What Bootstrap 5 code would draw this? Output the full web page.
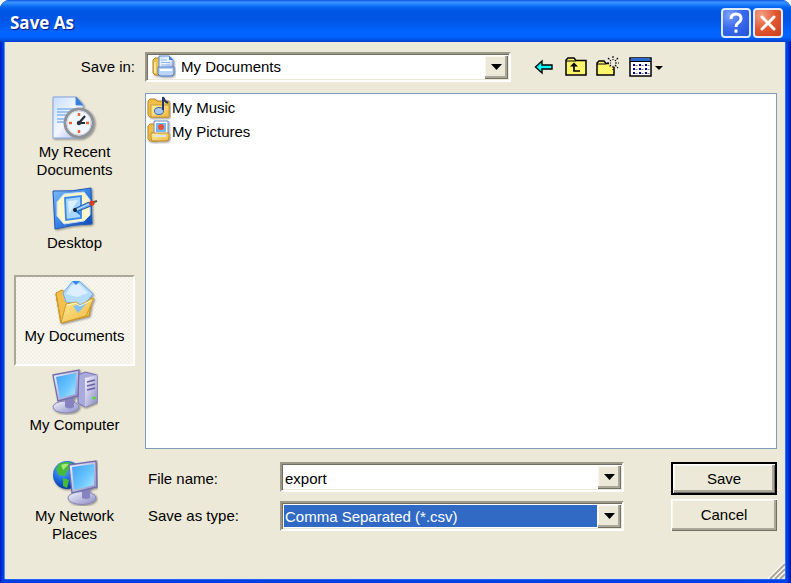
<!DOCTYPE html>
<html lang="en">
<head>
<meta charset="utf-8">
<meta name="viewport" content="width=device-width, initial-scale=1">
<title>Save As</title>
<link href="https://cdn.jsdelivr.net/npm/bootstrap@5.3.0/dist/css/bootstrap.min.css" rel="stylesheet">
<style>
  :root { --face: #ece9d8; --edge: #716f64; --shade: #aca899; --pick: #316ac5; }
  body { background: #fff; color: #000; font: 15px/18px "Liberation Sans", Arial, sans-serif; }
  .window { border-radius: 9px 9px 0 0; overflow: hidden; background: linear-gradient(90deg, #0019c8 0, #0040e0 3px, #0042e6 calc(100% - 4px), #0014a8 100%); }
  .titlebar {
    height: 42px; padding: 4px 8px 0 10px;
    background: linear-gradient(#0a50d8 0, #3c93ff 2px, #2a86ff 4px, #0566f2 7px, #0055e3 11px, #0055e5 20px, #0262fc 30px, #0264ff 37px, #0050e0 40px, #003cc8 42px);
  }
  .titlebar h1 { font: bold 17px/24px "Open Sans", "Noto Sans", sans-serif; color: #fff; text-shadow: 1px 1px 1px #0a1883; }
  .caption-btn { width: 30px; height: 30px; border: 2px solid #dfe9ff; border-radius: 4px; }
  .help-btn { margin-right: 2px; background: radial-gradient(circle at 25% 20%, #7ea2f6, #3a6bee 45%, #2350d8); }
  .close-btn { background: radial-gradient(circle at 25% 20%, #f2a084, #e2562f 50%, #c8401c); }
  .client {
    background: var(--face); margin: 0 6px 4px 5px; padding: 10px 8px 0 9px;
    box-shadow: -1px 0 #4d8cff, 0 1px #1d5eff, 1px 0 #2c6cff;
  }
  .side-width { width: 121px; }
  .gap-main { gap: 10px; }
  .tool-row { margin-bottom: 11px; }
  .combo {
    height: 30px; background: #fff; border: 2px solid; padding: 1px;
    border-color: #9c9989 #fff #fff #9c9989; box-shadow: inset 1px 1px var(--edge), inset -1px -1px var(--face);
  }
  .lookin { flex: 0 1 366px; }
  .combo select, .combo input {
    appearance: none; border: 0; outline: 0; background: transparent; padding: 0 1px; font: inherit; color: #000; border-radius: 0; margin: 1px 0 1px 1px;
  }
  .combo input { padding-top: 3px; }
  .combo .with-icon { padding-left: 32px; }
  .combo .picked { background: var(--pick); color: #fff; padding-top: 2px; }
  .combo .picked option { background: #fff; color: #000; }
  .lookin-icon { left: 5px; top: 1px; pointer-events: none; }
  .drop, .push {
    background: var(--face); border: 0; padding: 0; color: #000;
    box-shadow: inset 1px 1px #fff, inset -1px -1px var(--edge), inset -3px -3px var(--shade), inset 2px 2px #f8f6ee;
  }
  .drop { width: 24px; flex: none; }
  .drop-cover { pointer-events: none; }
  .tools { margin-left: 13px; gap: 9px; }
  .tools button { border: 0; padding: 0; background: none; line-height: 0; }
  .place { height: 91px; padding: 3px 0 0; border: 0; background: none; color: #000; line-height: 18px; }
  .place svg { margin-bottom: 1px; flex: none; }
  .place.chosen {
    border: 2px solid; border-color: var(--shade) #fff #fff var(--shade);
    background: repeating-conic-gradient(#faf8f1 0 25%, #f2f0e5 0 50%) 0 0 / 4px 4px;
  }
  .files { background: #fff; border: 1px solid #7f9db9; padding: 2px 1px; }
  .files a { color: #000; height: 24px; gap: 1px; }
  .fields { padding: 13px 0 48px; }
  .field-row label { flex: 0 0 135px; padding: 8px 0 6px 3px; }
  .push { flex: 0 0 106px; margin-left: 47px; height: 32px; }
  .push.main-push { border: 2px solid #000; height: 33px; }
  .grip { right: 6px; bottom: 4px; }
</style>
</head>
<body>
<svg width="0" height="0" class="position-absolute" aria-hidden="true">
  <defs>
    <linearGradient id="paper" x1="0" y1="0" x2="1" y2="1"><stop offset="0" stop-color="#c4dcff"/><stop offset=".5" stop-color="#f2f7ff"/><stop offset="1" stop-color="#a8b4ee"/></linearGradient>
    <linearGradient id="screen" x1="0" y1="0" x2="1" y2="1"><stop offset="0" stop-color="#3fa0f4"/><stop offset=".6" stop-color="#6cc8ff"/><stop offset="1" stop-color="#b2eaff"/></linearGradient>
    <linearGradient id="gold" x1="0" y1="0" x2="1" y2="1"><stop offset="0" stop-color="#fff3a8"/><stop offset="1" stop-color="#efb73c"/></linearGradient>
    <linearGradient id="metal" x1="0" y1="0" x2="1" y2="1"><stop offset="0" stop-color="#f4f4ff"/><stop offset="1" stop-color="#8c8cc4"/></linearGradient>
    <linearGradient id="tile" x1="0" y1="0" x2="1" y2="1"><stop offset="0" stop-color="#7cbcf8"/><stop offset=".5" stop-color="#3b84e4"/><stop offset="1" stop-color="#0b43b0"/></linearGradient>
    <radialGradient id="globe" cx=".35" cy=".3" r=".8"><stop offset="0" stop-color="#5cb8ff"/><stop offset=".55" stop-color="#1663d8"/><stop offset="1" stop-color="#062e88"/></radialGradient>
    <pattern id="dither" width="2" height="2" patternUnits="userSpaceOnUse"><path fill="#fff54a" d="M0 0h2v2H0z"/><path fill="#fff68c" d="M0 0h1v1H0zM1 1h1v1H1z"/></pattern>
    <filter id="drop" x="-20%" y="-20%" width="150%" height="150%"><feDropShadow dx="1" dy="1" stdDeviation="1" flood-opacity=".45"/></filter>
  </defs>
</svg>

<main class="window d-flex flex-column min-vh-100 position-relative">
  <header class="titlebar d-flex align-items-center">
    <h1 class="m-0 me-auto">Save As</h1>
    <button class="caption-btn help-btn p-0 d-flex align-items-center justify-content-center" aria-label="Help">
      <svg width="20" height="22" viewBox="0 0 20 22" fill="none" stroke="#fff" stroke-width="3"><path d="M5 7q0-5 5-5t5 4.500q0 2.500-3 4.500-2 1.500-2 4"/><path d="M10 17.500v3.200"/></svg>
    </button>
    <button class="caption-btn close-btn p-0 d-flex align-items-center justify-content-center" aria-label="Close">
      <svg width="18" height="18" viewBox="0 0 18 18" stroke="#fff" stroke-width="3" stroke-linecap="round"><path d="M3 3l12 12M15 3L3 15"/></svg>
    </button>
  </header>

  <div class="client flex-grow-1 d-flex flex-column">
    <div class="tool-row d-flex align-items-center gap-main">
      <label class="side-width text-end flex-shrink-0" for="lookin">Save in:</label>
      <div class="combo lookin d-flex position-relative">
        <svg class="lookin-icon position-absolute" width="24" height="24" viewBox="0 0 24 24">
          <g filter="url(#drop)"><path d="M1 5l2-2h4l2 2v15H3l-2-2z" fill="#f1c04c" stroke="#b9862a"/>
          <path d="M7 1h10l4 4v8H7z" fill="url(#paper)" stroke="#5c8fd4"/><path d="M17 1v4h4z" fill="#3c82dc"/><path d="M9 5h6M9 7.500h9M9 10h9" stroke="#8db8ec"/>
          <path d="M6 12h16v6q0 3-3 3H9q-3 0-3-3z" fill="#b9d4f6" stroke="#4c7cc0"/><path d="M8 15h12" stroke="#fff" stroke-width="2"/><path d="M3 7v11" stroke="#ffe595" stroke-width="2"/></g>
        </svg>
        <select id="lookin" class="with-icon flex-grow-1"><option>My Documents</option></select>
        <span class="drop d-flex align-items-center justify-content-center drop-cover"><svg width="11" height="6"><path d="M0 0h11L5.500 6z"/></svg></span>
      </div>
      <div class="tools d-flex align-items-center">
        <button aria-label="Back"><svg width="22" height="24" viewBox="0 0 22 24"><path d="M1.500 12L8 6v4h10v4H8v4z" fill="#0ff" stroke="#000" stroke-width="1.400"/></svg></button>
        <button aria-label="Up one level"><svg width="22" height="24" viewBox="0 0 22 24"><path d="M1 20V5l2-2h6l2 2.500h10V20z" fill="url(#dither)" stroke="#000" stroke-width="1.500"/><path d="M1 6h10" stroke="#000"/><path d="M9 10v6h6" fill="none" stroke="#000" stroke-width="1.700"/><path d="M5 11.500L9 7.500l4 4z"/></svg></button>
        <button aria-label="New folder"><svg width="24" height="24" viewBox="0 0 24 24"><path d="M1 20V8l2-2h5l2 2.500h8V20z" fill="url(#dither)" stroke="#000" stroke-width="1.500"/><path d="M1 9h9" stroke="#000"/><circle cx="17" cy="8" r="4" fill="#ece9d8"/><path d="M17 1v4M17 11v4M11 8h4M19 8h4M12 3l3 3M22 3l-3 3M19 10l3 3M15 10l-2 2" stroke="#000" stroke-width="1.100" stroke-dasharray="2 1"/></svg></button>
        <button aria-label="View menu"><svg width="34" height="24" viewBox="0 0 34 24"><path d="M1 3h21v18H1z" fill="#fff" stroke="#000" stroke-width="1.500"/><path d="M2 3h19v3H2z" fill="#2a68cc"/><path d="M1 6.500h21" stroke="#000"/><path d="M4 10h2M10 10h2M16 10h2M4 14h2M10 14h2M16 14h2M4 18h2M10 18h2M16 18h2" stroke="#000098" stroke-width="2"/><path d="M6.500 10.500h2M12.500 10.500h2M18.500 10.500h2M6.500 14.500h2M12.500 14.500h2M18.500 14.500h2M6.500 18.500h2M12.500 18.500h2M18.500 18.500h2" stroke="#778"/><path d="M26 11h8l-4 4z"/></svg></button>
      </div>
    </div>

    <div class="d-flex flex-grow-1 gap-main">
      <nav class="side-width flex-shrink-0 d-flex flex-column" aria-label="Places">
        <button class="place d-flex flex-column align-items-center justify-content-start">
          <svg width="46" height="46" viewBox="0 0 46 46"><g filter="url(#drop)">
            <path d="M1 1h23l7 8v33H1z" fill="url(#paper)" stroke="#86a6de"/><path d="M24 1v8h7z" fill="#2f7fe0" stroke="#4a86d4"/>
            <path d="M5 13h18M5 16h14M5 19h10M5 23h8M5 26h7" stroke="#84b6f0" stroke-width="1.300"/>
            <circle cx="27" cy="27" r="14" fill="#fff" stroke="#8f9299" stroke-width="3"/><circle cx="27" cy="27" r="12" fill="#f0f8ff" stroke="#cfd4dc"/></g>
            <path d="M27 17v3M27 34v3M17 27h3M34 27h3" stroke="#f0642c" stroke-width="2.500"/><path d="M33 20l-6 7h6" fill="none" stroke="#26303c" stroke-width="2.200"/><circle cx="27" cy="27" r="2.200" fill="#334"/>
          </svg><span>My Recent<br>Documents</span>
        </button>
        <button class="place d-flex flex-column align-items-center justify-content-start">
          <svg width="46" height="46" viewBox="0 0 46 46"><g filter="url(#drop)">
            <path d="M1 4q20 1 38-3l1 36q-19 0-37 5z" fill="url(#tile)" stroke="#1c58b8"/>
            <path d="M12 7l20-2 6 8v15l-6 6-20 3-7-8V15z" fill="#fff6cc" stroke="#c9ddf4"/>
            <path d="M13 11l16-2v22l-15 2z" fill="#a7d6ff" stroke="#3a8bea" stroke-width="1.800"/><path d="M16 14l10-1-9 14z" fill="#dcefff"/></g>
            <path d="M22 22l15-7 2 4-15 6z" fill="#5ea8f6" stroke="#235ba4"/><path d="M24 23l13-6" stroke="#d4eaff"/><circle cx="23" cy="23" r="2" fill="#123"/><path d="M24 25l5 4-2-6z" fill="#2378d4"/><circle cx="40" cy="16" r="2.600" fill="#e03c1c"/><path d="M42 15l3-1" stroke="#555" stroke-width="2"/>
          </svg><span>Desktop</span>
        </button>
        <button class="place chosen d-flex flex-column align-items-center justify-content-start" aria-current="true">
          <svg width="46" height="46" viewBox="0 0 46 46"><g filter="url(#drop)">
            <path d="M4 13l6-3 5 4 18-3 7 9-3 16-28 7z" fill="#f2c04c" stroke="#c48c20"/>
            <path d="M20 2h8l13 12-9 11-18-3-3-9z" fill="#b4dcff" stroke="#6cacec"/><path d="M20 5l7-1 9 9-11 4-11-3z" fill="#dceeff"/><path d="M20 1h8l-4 4z" fill="#2d8ae8"/>
            <path d="M4 14l5 29 5-19 10-2 4 3 14-7-8 18-25 7z" fill="url(#gold)" stroke="#d09a2a"/></g>
            <path d="M21 26l14-3-9 10z" fill="#84c0f4"/><path d="M15 25l9-2 4 3 12-6" fill="none" stroke="#fffbd0"/>
          </svg><span>My Documents</span>
        </button>
        <button class="place d-flex flex-column align-items-center justify-content-start">
          <svg width="46" height="46" viewBox="0 0 46 46"><g filter="url(#drop)">
            <path d="M26 6l7-3 12 3v27l-12 5-7-4z" fill="#aaa9dc" stroke="#7472b4"/><path d="M33 9l12-3v27l-12 5z" fill="url(#metal)"/><path d="M35 13l8-2M35 17l8-2M35 21l8-2" stroke="#6462a0" stroke-width="1.500"/><circle cx="42" cy="29" r="1.800" fill="#5cd43c"/>
            <ellipse cx="14" cy="38" rx="13" ry="6" fill="url(#metal)" stroke="#8886b8"/><path d="M13 29l9-2v11q-4 3-9 0z" fill="#8583c0"/>
            <path d="M1 6l26-5-1 26-20 5z" fill="url(#metal)" stroke="#706eae" stroke-width="1.300"/></g>
            <path d="M4 8l20-4-1 21-15 4z" fill="url(#screen)"/>
          </svg><span>My Computer</span>
        </button>
        <button class="place d-flex flex-column align-items-center justify-content-start">
          <svg width="46" height="46" viewBox="0 0 46 46"><g filter="url(#drop)">
            <circle cx="15" cy="15" r="14" fill="url(#globe)"/><path d="M7 4q8-4 14 0l-1 5-5 2-2 5-6-1-3-6zM11 18l6 2-2 8-4-2z" fill="#46bb38"/><path d="M9 5q5-2 8-1l-6 6z" fill="#a4e878"/>
            <ellipse cx="30" cy="38" rx="14" ry="6.500" fill="url(#metal)" stroke="#8886b8"/><path d="M30 29l8-2v11q-4 2-8 0z" fill="#8583c0"/>
            <path d="M17 5l27-4 1 26-25 6z" fill="url(#metal)" stroke="#706eae" stroke-width="1.300"/></g>
            <path d="M20 7l22-3v21l-20 5z" fill="url(#screen)"/>
          </svg><span>My Network<br>Places</span>
        </button>
      </nav>

      <div class="flex-grow-1 d-flex flex-column">
        <ul class="files list-unstyled m-0 flex-grow-1">
          <li><a href="#" class="d-flex align-items-center text-decoration-none">
            <svg width="24" height="24" viewBox="0 0 24 24"><g filter="url(#drop)"><path d="M1 5l2-2h5l2 2h12v16H3l-2-2z" fill="#f1bf48" stroke="#b9862a"/><path d="M4 9h18v12H4z" fill="url(#gold)" stroke="#cc9834"/></g><ellipse cx="12" cy="15" rx="4.500" ry="3.500" fill="#a8c6f2" stroke="#3f62a8"/><path d="M16 14V1q1 4 5 6" fill="none" stroke="#26376c" stroke-width="2"/></svg>My Music</a></li>
          <li><a href="#" class="d-flex align-items-center text-decoration-none">
            <svg width="24" height="24" viewBox="0 0 24 24"><g filter="url(#drop)"><path d="M1 6l2-2h5l2 2v15H3l-2-2z" fill="#f1bf48" stroke="#b9862a"/><path d="M7 1h14v13H7z" fill="#fff" stroke="#6c8cc8"/><path d="M9 3h10v9H9z" fill="#72b8f4"/><circle cx="14" cy="7" r="3" fill="#e4553c"/><path d="M4 13h18v5q0 3-3 3H6q-2 0-2-3z" fill="url(#gold)" stroke="#b98a30"/><path d="M8 15h11v2H8z" fill="#d6e6fa"/></g></svg>My Pictures</a></li>
        </ul>

        <form class="fields d-flex flex-column gap-1" onsubmit="return false">
          <div class="d-flex field-row align-items-start">
            <label for="fname">File name:</label>
            <div class="combo d-flex flex-grow-1">
              <input id="fname" type="text" value="export" class="flex-grow-1 w-100">
              <button type="button" class="drop" aria-label="Recent names"><svg width="11" height="6" class="d-block mx-auto"><path d="M0 0h11L5.500 6z"/></svg></button>
            </div>
            <button type="submit" class="push main-push">Save</button>
          </div>
          <div class="d-flex field-row align-items-end">
            <label for="ftype">Save as type:</label>
            <div class="combo d-flex flex-grow-1">
              <select id="ftype" class="picked flex-grow-1"><option>Comma Separated (*.csv)</option></select>
              <span class="drop d-flex align-items-center justify-content-center drop-cover"><svg width="11" height="6"><path d="M0 0h11L5.500 6z"/></svg></span>
            </div>
            <button type="button" class="push">Cancel</button>
          </div>
        </form>
      </div>
    </div>
  </div>
  <svg class="grip position-absolute" width="18" height="18" viewBox="0 0 18 18"><path d="M1 18L18 1M6 18L18 6M11 18l7-7" stroke="#fff" stroke-width="1.500"/><path d="M3 18L18 3M8 18L18 8M13 18l5-5" stroke="#aca899" stroke-width="2"/></svg>
</main>
<script src="https://cdn.jsdelivr.net/npm/bootstrap@5.3.0/dist/js/bootstrap.bundle.min.js"></script>
</body>
</html>
